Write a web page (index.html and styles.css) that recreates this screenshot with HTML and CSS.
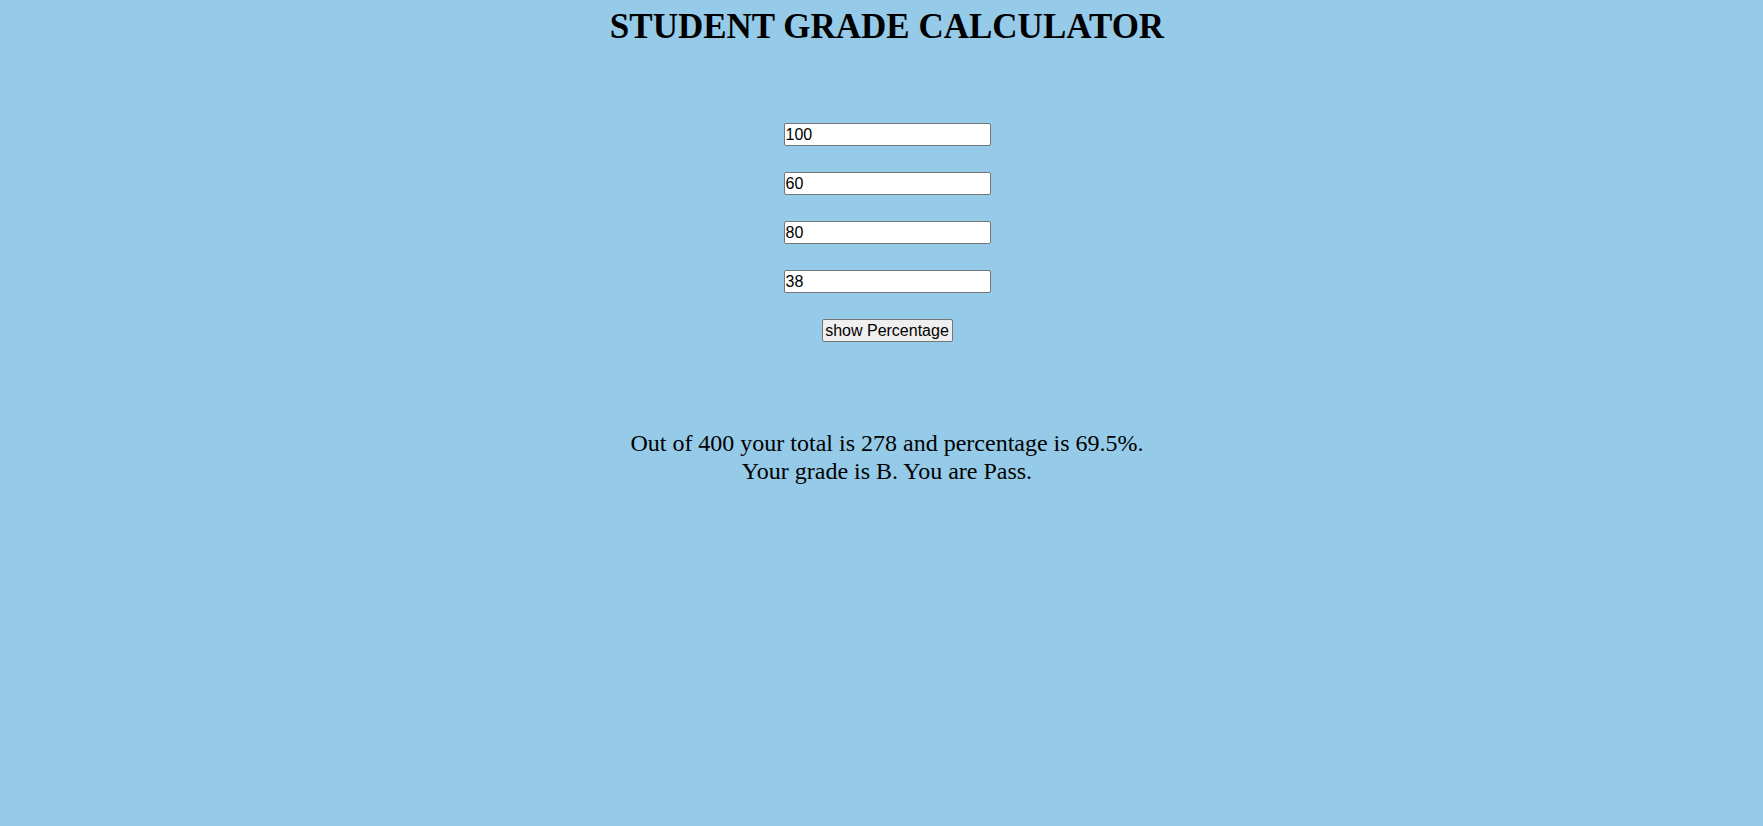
FILE: index.html
```html
<!DOCTYPE html>
<html>
<head>
<meta charset="utf-8">
<title>Student Grade Calculator</title>
<link rel="stylesheet" href="styles.css">
</head>
<body>
<main class="page">
  <h1 class="title">STUDENT GRADE CALCULATOR</h1>
  <form class="form">
    <input class="field" type="text" value="100">
    <input class="field" type="text" value="60">
    <input class="field" type="text" value="80">
    <input class="field" type="text" value="38">
    <button class="btn" type="button">show Percentage</button>
  </form>
  <p class="result">Out of 400 your total is 278 and percentage is 69.5%.<br>Your grade is B. You are Pass.</p>
</main>
</body>
</html>
```
FILE: styles.css
```css
html, body {
  margin: 0;
  background: #95cbe8;
}
body {
  padding-top: 8px;
  min-height: 826px;
  box-sizing: border-box;
}
.page {
  display: flex;
  flex-direction: column;
  align-items: center;
  padding-left: 11px;
  font-family: "Liberation Serif", "Times New Roman", serif;
  color: #000;
}
.title {
  margin: 0;
  font-size: 35px;
  font-weight: bold;
  line-height: 38px;
}
.form {
  margin-top: 77px;
  display: flex;
  flex-direction: column;
  align-items: center;
  gap: 26px;
}
.field {
  width: 207px;
  height: 23px;
  box-sizing: border-box;
  margin: 0;
  padding: 1px 1px;
  border: 1px solid #767676;
  border-radius: 2px;
  background: #fff;
  font-family: "Liberation Sans", Arial, sans-serif;
  font-size: 16px;
  color: #000;
}
.btn {
  width: 131px;
  height: 23px;
  box-sizing: border-box;
  margin: 0;
  padding: 0 1px;
  border: 1px solid #767676;
  border-radius: 2px;
  background: #efefef;
  font-family: "Liberation Sans", Arial, sans-serif;
  font-size: 16px;
  color: #000;
}
.result {
  margin: 87px 0 0;
  text-align: center;
  font-size: 24px;
  line-height: 28px;
}
```
